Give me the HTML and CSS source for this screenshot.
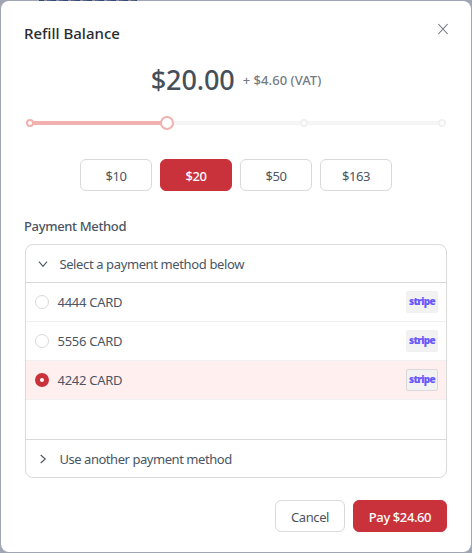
FILE: index.html
```html
<!DOCTYPE html>
<html lang="en">
<head>
<meta charset="utf-8">
<title>Refill Balance</title>
<link rel="stylesheet" href="styles.css">
</head>
<body>
<div class="peek"></div>
<main class="modal">
  <header class="modal-header">
    <h1 class="title"><span>Refill Balance</span></h1>
    <svg class="close" width="12" height="12" viewBox="0 0 12 12"><path d="M1.4 1 10.6 11M10.6 1 1.4 11"/></svg>
  </header>
  <div class="amount"><span class="total">$20.00</span><span class="vat">+ $4.60 (VAT)</span></div>
  <svg class="slider" width="422" height="16" viewBox="0 0 422 16">
    <path class="rail" d="M5 8H417"/>
    <path class="track" d="M5 8H142"/>
    <circle class="dot active" cx="5" cy="8" r="3"/>
    <circle class="dot" cx="279" cy="8" r="3"/>
    <circle class="dot" cx="417" cy="8" r="3"/>
    <circle class="handle" cx="142" cy="8" r="6"/>
  </svg>
  <div class="presets">
    <button class="btn">$10</button>
    <button class="btn primary">$20</button>
    <button class="btn">$50</button>
    <button class="btn">$163</button>
  </div>
  <h2 class="label"><span>Payment Method</span></h2>
  <section class="collapse">
    <div class="panel-head">
      <svg class="arrow" width="10" height="10" viewBox="0 0 10 10"><path d="M1 2.7 5 7.3 9 2.7"/></svg>
      <span class="select-text">Select a payment method below</span>
    </div>
    <div class="methods">
      <div class="method"><i class="radio"></i><span class="name">4444 CARD</span><span class="stripe"><b>stripe</b></span></div>
      <div class="method"><i class="radio"></i><span class="name">5556 CARD</span><span class="stripe"><b>stripe</b></span></div>
      <div class="method selected"><i class="radio"></i><span class="name">4242 CARD</span><span class="stripe"><b>stripe</b></span></div>
    </div>
    <div class="panel-head last">
      <svg class="arrow" width="10" height="10" viewBox="0 0 10 10"><path d="M2.7 1 7.3 5 2.7 9"/></svg>
      <span class="other-text">Use another payment method</span>
    </div>
  </section>
  <footer class="actions">
    <button class="btn cancel">Cancel</button>
    <button class="btn primary pay">Pay $24.60</button>
  </footer>
</main>
</body>
</html>
```
FILE: styles.css
```css
* { box-sizing: border-box; }
body { margin: 0; padding: 1px; height: 553px; overflow: hidden; background: #a0a6b3; color: #4b5563; font: 13px/20px "Noto Sans", "Open Sans", sans-serif; }
.peek { position: absolute; top: 0; left: 39px; width: 98px; height: 1px; background: repeating-linear-gradient(90deg, #304b7c 0 5px, #8e879a 5px 8px, #53658d 8px 12px); }
.modal { display: flex; flex-direction: column; width: 470px; height: 551px; padding: 20px 24px; background: #fff; border-radius: 8px; position: relative; }
.modal-header { display: flex; justify-content: space-between; height: 24px; }
.title { margin: 0 0 0 -1px; font-size: 15px; line-height: 24px; font-weight: 500; color: #2a2c2f; letter-spacing: 0; }
.close { margin: 2px -2px 0 0; fill: none; stroke: #6b7280; stroke-width: 1.1; }
.amount { display: flex; align-items: center; justify-content: center; height: 40px; margin-top: 15px; gap: 8px; }
.total { font-size: 27px; font-weight: 500; color: #46505b; letter-spacing: -.1px; }
.vat { font-size: 13px; font-weight: 500; color: #747b85; letter-spacing: .05px; }
.slider { display: block; flex: none; margin-top: 15px; }
.rail, .track { stroke: #f5f5f5; stroke-width: 4; }
.track { stroke: #f2b0ae; }
.dot, .handle { fill: #fff; stroke: #f0f0f0; stroke-width: 2; }
.active, .handle { stroke: #f2b0ae; }
.presets { display: flex; justify-content: center; gap: 8px; margin-top: 28px; }
.btn { width: 72px; height: 32px; padding: 2px 0 0; border: 1px solid #d9d9d9; border-radius: 6px; background: #fff; color: #4b5563; font: 13px/20px "Noto Sans", sans-serif; letter-spacing: -.4px; }
.primary { background: #c9323a; border-color: #c9323a; color: #fff; font-weight: 500; }
.label { margin: 25px 0 8px -1px; font-size: 13px; font-weight: 500; line-height: 20px; letter-spacing: -.35px; }
.collapse { height: 234px; border: 1px solid #d9d9d9; border-radius: 8px; overflow: hidden; }
.panel-head { display: flex; align-items: center; height: 38px; padding-left: 12px; border-bottom: 1px solid #d9d9d9; }
.panel-head.last { border: 0; }
.panel-head span { margin: 0 0 0 11.4px; letter-spacing: -.38px; }
.panel-head.last span { letter-spacing: -.45px; }
.arrow { fill: none; stroke: #4b5563; stroke-width: 1.1; }
.methods { height: 157px; border-bottom: 1px solid #d9d9d9; }
.method { display: flex; align-items: center; height: 39px; padding: 0 8px 0 9px; border-bottom: 1px solid #f0f0f0; }
.selected { background: #fff0ef; }
.radio { width: 14px; height: 14px; border: 1px solid #d9d9d9; border-radius: 50%; background: #fff; }
.selected .radio { border: 5px solid #c9323a; }
.name { margin: 0 auto 0 8.6px; letter-spacing: -.3px; }
.stripe { display: flex; align-items: center; justify-content: center; width: 32px; height: 22px; border: 1px solid #f0f0f0; border-radius: 2px; background: #f2f2f2; }
.stripe b { margin-top: -2px; font: 800 10px/20px "Open Sans", sans-serif; color: #6558ff; letter-spacing: -.75px; }
.selected .stripe { border-color: #d9d9d9; }
.actions { display: flex; justify-content: flex-end; gap: 8px; margin-top: 22px; }
.cancel { width: 70px; }
.pay { width: 94px; }
```
